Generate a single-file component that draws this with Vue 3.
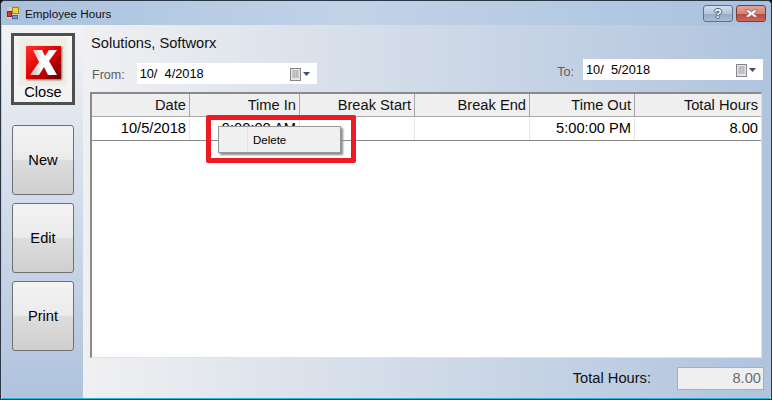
<script setup>
const columns = [
  { title: 'Date', width: 98, value: '10/5/2018' },
  { title: 'Time In', width: 110, value: '9:00:00 AM' },
  { title: 'Break Start', width: 115, value: '' },
  { title: 'Break End', width: 115, value: '' },
  { title: 'Time Out', width: 105, value: '5:00:00 PM' },
  { title: 'Total Hours', width: 126, value: '8.00' }
];
const sideButtons = ['New', 'Edit', 'Print'];
const fromDate = '10/  4/2018';
const toDate = '10/  5/2018';
</script>

<template>
  <div class="window">
    <div class="titlebar">
      <svg class="app-icon" width="14" height="14" viewBox="0 0 14 14">
        <rect x="0.5" y="0.5" width="13" height="13" fill="#c3cfdd" stroke="#b3b6b4" />
        <rect x="1.5" y="5.500" width="4" height="5" fill="#d83a2a" stroke="#7a2a20" />
        <rect x="6.500" y="1.500" width="6" height="6" fill="#f6cf3e" stroke="#a8871f" />
        <rect x="6.500" y="9.500" width="5" height="3" fill="#6f9fe0" stroke="#3f67a8" />
      </svg>
      <span class="title">Employee Hours</span>
      <div class="caption-buttons">
        <div class="cap-btn help">?</div>
        <div class="cap-btn close-x">
          <svg width="13" height="9" viewBox="0 0 16 10">
            <path d="M1 .5h4l3 2.500L11 .5h4v1L11 5l4 3.500v1h-4L8 7 5 9.500H1v-1L5 5 1 1.500z" fill="#fff" stroke="#7c3d36" stroke-width="0.8" />
          </svg>
        </div>
      </div>
    </div>

    <div class="body">
      <aside class="sidebar">
        <div class="close-btn">
          <div class="close-icon-bg">
            <div class="close-icon">
              <svg width="35" height="33" viewBox="0 0 35 33">
                <defs>
                  <linearGradient id="xfill" x1="0" y1="0" x2="1" y2="0">
                    <stop offset="0" stop-color="#b9b0b0" />
                    <stop offset="0.45" stop-color="#ffffff" />
                  </linearGradient>
                </defs>
                <path d="M7 4h9l3 6 4-6h8l-8 11 8 14h-9l-4-8-5 8H4l9-13z" fill="url(#xfill)" />
              </svg>
            </div>
          </div>
          <span>Close</span>
        </div>
        <div v-for="label in sideButtons" :key="label" class="side-btn">{{ label }}</div>
      </aside>

      <main class="content">
        <div class="name">Solutions, Softworx</div>
        <div class="range">
          <div class="range-item from-item">
            <label>From:</label>
            <div class="date-input">
              <span>{{ fromDate }}</span>
              <svg width="21" height="13" viewBox="0 0 21 13">
                <rect x="0.500" y="0.500" width="10" height="12" fill="#e6e6e6" stroke="#85858a" />
                <path d="M2 3h7M2 5h7M2 7h7M2 9h7M4 2v8M7 2v8" stroke="#b0b0b4" stroke-width="1" />
                <path d="M13 4h7l-3.500 4z" fill="#3d5170" />
              </svg>
            </div>
          </div>
          <div class="range-item">
            <label class="to">To:</label>
            <div class="date-input">
              <span>{{ toDate }}</span>
              <svg width="21" height="13" viewBox="0 0 21 13">
                <rect x="0.500" y="0.500" width="10" height="12" fill="#e6e6e6" stroke="#85858a" />
                <path d="M2 3h7M2 5h7M2 7h7M2 9h7M4 2v8M7 2v8" stroke="#b0b0b4" stroke-width="1" />
                <path d="M13 4h7l-3.500 4z" fill="#3d5170" />
              </svg>
            </div>
          </div>
        </div>

        <div class="grid">
          <div class="grid-row header">
            <div v-for="col in columns" :key="col.title" class="cell" :style="{ width: col.width + 'px' }">{{ col.title }}</div>
          </div>
          <div class="grid-row data">
            <div v-for="col in columns" :key="col.title" class="cell" :style="{ width: col.width + 'px' }">{{ col.value }}</div>
          </div>

          <div class="highlight">
            <div class="context-menu">
              <div class="menu-gutter"></div>
              <div class="menu-item">Delete</div>
            </div>
          </div>
        </div>

        <div class="footer">
          <span class="footer-label">Total Hours:</span>
          <div class="footer-value">8.00</div>
        </div>
      </main>
    </div>
  </div>
</template>

<style>
html,
body {
  margin: 0;
  background: #0c1420;
}
</style>

<style scoped>
.window {
  width: 772px;
  height: 400px;
  box-sizing: border-box;
  display: flex;
  flex-direction: column;
  overflow: hidden;
  border: 1px solid #2b3644;
  border-radius: 5px 5px 0 0;
  background: #b9cce4;
  font-family: "Liberation Sans", Arial, sans-serif;
  color: #000;
}

.titlebar {
  height: 24px;
  flex: none;
  display: flex;
  align-items: center;
  padding: 0 5px 0 5px;
  background: linear-gradient(90deg, #a9c1de 0%, #c2d3e8 45%, #a9c1de 100%);
}

.app-icon {
  margin-right: 5px;
}

.title {
  font-size: 11.7px;
  color: #111;
}

.caption-buttons {
  margin-left: auto;
  display: flex;
  gap: 3px;
}

.cap-btn {
  width: 30px;
  height: 17px;
  box-sizing: border-box;
  border: 1px solid #5f7187;
  border-radius: 3px;
  display: flex;
  align-items: center;
  justify-content: center;
}

.help {
  background: linear-gradient(#cfdcec 0%, #b2c5dd 50%, #93a9c4 51%, #a9bfd8 100%);
  color: #fff;
  font-size: 13px;
  font-weight: 700;
  text-shadow: 1px 0 0 #4a5a6e, -1px 0 0 #4a5a6e, 0 1px 0 #4a5a6e, 0 -1px 0 #4a5a6e;
}

.close-x {
  background: linear-gradient(#e0a49c 0%, #d4837a 50%, #b9473c 51%, #c9685c 100%);
  border-color: #7d3d36;
}

.body {
  flex: 1;
  display: flex;
  min-height: 0;
  margin: 0 1px;
  border-bottom: 1px solid #25b6d8;
}

.sidebar {
  width: 81px;
  flex: none;
  box-sizing: border-box;
  padding: 8px 8px 0 9px;
  display: flex;
  flex-direction: column;
  align-items: center;
  gap: 8px;
  background: linear-gradient(#f2f3f6 0%, #afc3dd 100%);
}

.close-btn {
  width: 64px;
  height: 72px;
  box-sizing: border-box;
  flex: none;
  border: 3px solid #4f4f4f;
  margin-bottom: 12px;
  display: flex;
  flex-direction: column;
  align-items: center;
  background: #f4f4f4;
  font-size: 14.67px;
}

.close-icon-bg {
  width: 48px;
  height: 48px;
  margin-top: 2px;
  display: flex;
  align-items: center;
  justify-content: center;
  background: #efeee4;
}

.close-icon {
  width: 35px;
  height: 33px;
  display: flex;
  background: linear-gradient(135deg, #ff3030 0%, #e00000 50%, #6a0000 100%);
  box-shadow: 1px 1px 2px #666;
}

.close-btn span {
  margin-top: -2px;
  line-height: 16px;
}

.side-btn {
  width: 62px;
  height: 70px;
  flex: none;
  box-sizing: border-box;
  border: 1px solid #707070;
  border-radius: 3px;
  display: flex;
  align-items: center;
  justify-content: center;
  font-size: 14.67px;
  background: linear-gradient(#f3f3f3 0%, #ebebeb 49%, #dddddd 50%, #cfcfcf 100%);
}

.content {
  flex: 1;
  min-width: 0;
  display: flex;
  flex-direction: column;
  padding-left: 7px;
  background: linear-gradient(90deg, #f0f0f2 0%, #b0c4de 100%);
}

.name {
  font-size: 14.67px;
  line-height: 16px;
  margin-top: 10px;
  padding-left: 1px;
  color: #111;
}

.range {
  display: flex;
  justify-content: space-between;
  align-items: flex-start;
  margin-top: 8px;
  padding-right: 7px;
}

.range-item {
  display: flex;
  align-items: center;
}

.from-item {
  margin-top: 4px;
  padding-left: 2px;
}

.range-item label {
  font-size: 12.5px;
  color: #5c5c5c;
  margin: 3px 12px 0 0;
}

.range-item label.to {
  margin-right: 9px;
  margin-top: 5px;
}

.date-input {
  width: 180px;
  height: 21px;
  box-sizing: border-box;
  display: flex;
  align-items: center;
  justify-content: space-between;
  padding: 0 6px 0 3px;
  background: #fff;
  font-size: 12.8px;
  white-space: pre;
}

.date-input svg {
  margin-top: 2px;
}

.grid {
  position: relative;
  width: 672px;
  height: 266px;
  margin-top: 8px;
  box-sizing: border-box;
  flex: none;
  background: #fff;
  border: 1px solid #e2e2e2;
  border-top: 2px solid #8a8a8a;
  border-left: 2px solid #8a8a8a;
}

.grid-row {
  display: flex;
}

.cell {
  flex: none;
  box-sizing: border-box;
  text-align: right;
  font-size: 14.67px;
  padding-right: 3px;
  white-space: nowrap;
  overflow: hidden;
}

.header {
  height: 23px;
  line-height: 22px;
  background: #efefef;
}

.header .cell {
  border-right: 1px solid #a8a8a8;
  border-bottom: 1px solid #a8a8a8;
  color: #111;
}

.header .cell:last-child {
  border-right: 0;
}

.data {
  height: 24px;
  line-height: 23px;
  border-bottom: 1px solid #8c8c8c;
  box-sizing: border-box;
}

.data .cell {
  border-right: 1px solid #e6e6e6;
}

.data .cell:last-child {
  border-right: 0;
}

.highlight {
  position: absolute;
  left: 114px;
  top: 21px;
  width: 150px;
  height: 48px;
  box-sizing: border-box;
  border: 5px solid #ed1c24;
  border-radius: 2px;
}

.context-menu {
  position: absolute;
  left: 7px;
  top: 6px;
  width: 123px;
  height: 27px;
  box-sizing: border-box;
  display: flex;
  background: #f0f0f0;
  border: 1px solid #979797;
  box-shadow: 2px 2px 2px #8a8a8a;
}

.menu-gutter {
  width: 29px;
  border-right: 1px solid #e2e3e3;
  box-sizing: border-box;
}

.menu-item {
  padding-left: 5px;
  font-size: 11.5px;
  line-height: 26px;
}

.footer {
  flex: 1;
  display: flex;
  align-items: center;
  justify-content: flex-end;
  padding-right: 6px;
}

.footer-label {
  font-size: 14.67px;
  margin-right: 26px;
  color: #111;
}

.footer-value {
  width: 87px;
  height: 23px;
  box-sizing: border-box;
  border: 1px solid #a6b0bc;
  background: #efefef;
  color: #6d6d6d;
  font-size: 14.67px;
  text-align: right;
  line-height: 21px;
  padding-right: 2px;
}
</style>
